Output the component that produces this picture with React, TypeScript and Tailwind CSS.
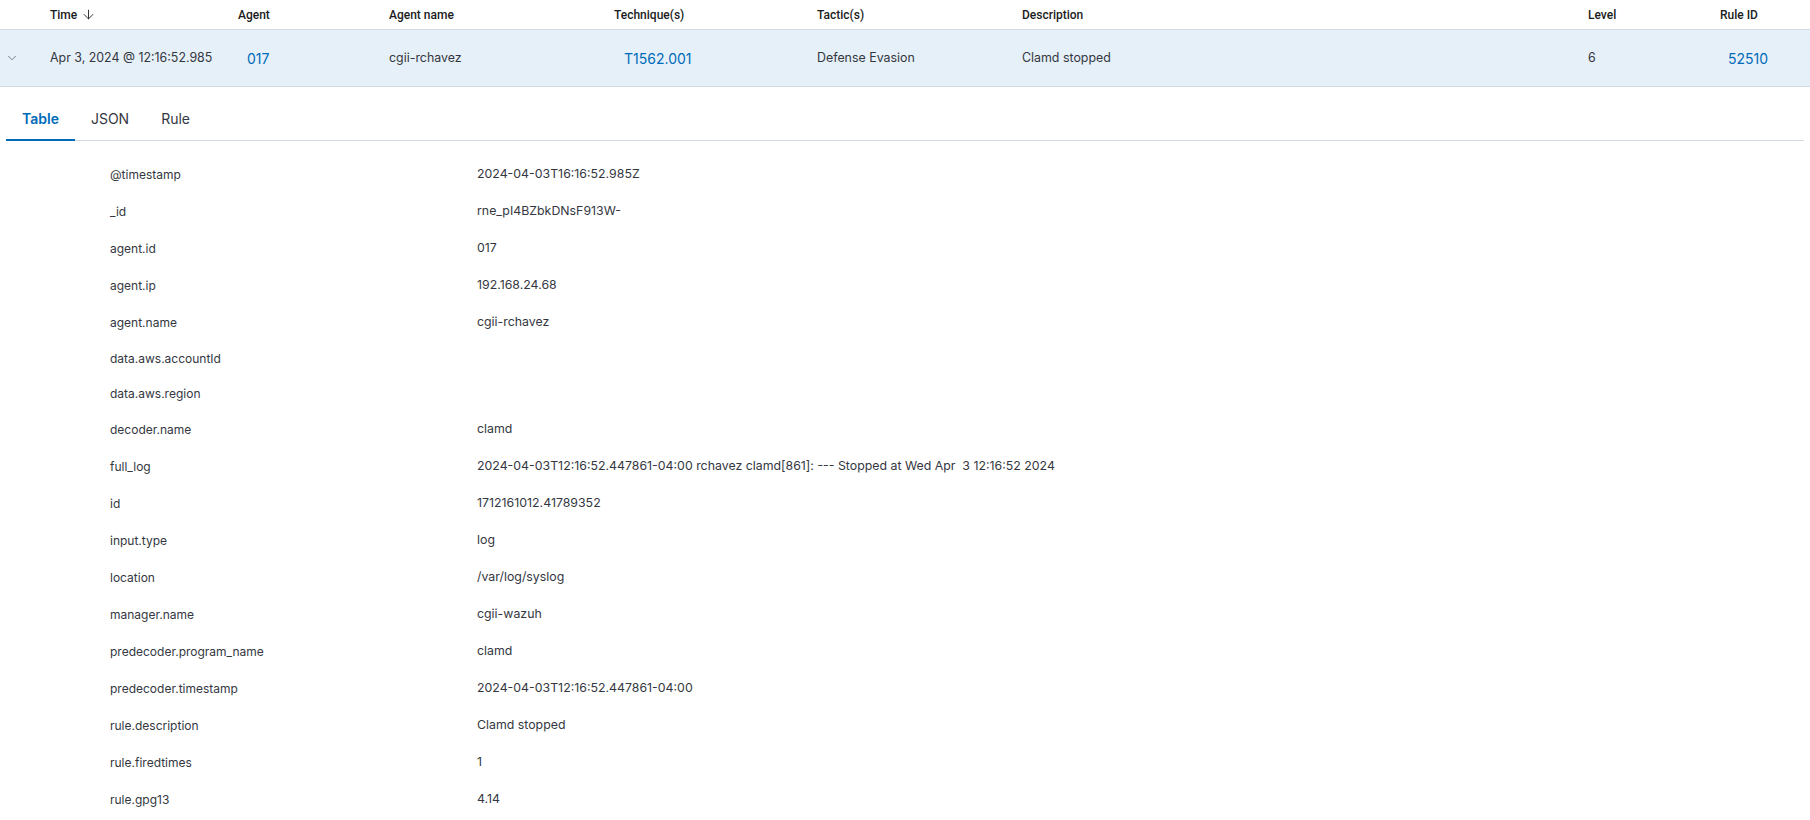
import { ArrowDown, ChevronDown } from 'lucide-react';

const fields: [string, string][] = [
  ['@timestamp', '2024-04-03T16:16:52.985Z'],
  ['_id', 'rne_pI4BZbkDNsF913W-'],
  ['agent.id', '017'],
  ['agent.ip', '192.168.24.68'],
  ['agent.name', 'cgii-rchavez'],
  ['data.aws.accountId', ''],
  ['data.aws.region', ''],
  ['decoder.name', 'clamd'],
  ['full_log', '2024-04-03T12:16:52.447861-04:00 rchavez clamd[861]: --- Stopped at Wed Apr  3 12:16:52 2024'],
  ['id', '1712161012.41789352'],
  ['input.type', 'log'],
  ['location', '/var/log/syslog'],
  ['manager.name', 'cgii-wazuh'],
  ['predecoder.program_name', 'clamd'],
  ['predecoder.timestamp', '2024-04-03T12:16:52.447861-04:00'],
  ['rule.description', 'Clamd stopped'],
  ['rule.firedtimes', '1'],
  ['rule.gpg13', '4.14'],
];

const App = () => {
  return (
    <div className="h-[820px] w-full overflow-hidden bg-white text-[#343741]" style={{ fontFamily: 'Inter, "Noto Sans", sans-serif' }}>
      {/* Column headers */}
      <div
        className="flex h-[30px] items-center border-b border-[#d3dae6] text-[12px] font-medium text-[#1a1c21]"
        style={{ fontFamily: 'Roboto, Inter, sans-serif' }}
      >
        <div className="w-[50px]" />
        <div className="flex w-[188px] items-center gap-[4px]">
          Time
          <ArrowDown className="h-[15px] w-[15px]" strokeWidth={1.4} />
        </div>
        <div className="w-[151px]">Agent</div>
        <div className="w-[225px]">Agent name</div>
        <div className="w-[203px]">Technique(s)</div>
        <div className="w-[205px]">Tactic(s)</div>
        <div className="w-[566px]">Description</div>
        <div className="w-[132px]">Level</div>
        <div className="flex-1">Rule ID</div>
      </div>

      {/* Expanded row */}
      <div className="flex h-[57px] items-center border-b border-[#d3dae6] bg-[#e6f0f8] text-[12.4px]">
        <div className="flex w-[50px] pl-[5px]">
          <ChevronDown className="h-[14px] w-[14px] text-[#535966]" strokeWidth={1.3} />
        </div>
        <div className="w-[188px]">Apr 3, 2024 @ 12:16:52.985</div>
        <div className="w-[151px] pl-[9px] text-[14px] text-[#006bb8]">017</div>
        <div className="w-[225px]">cgii-rchavez</div>
        <div className="w-[203px] pl-[10px] text-[14px] text-[#006bb8]">T1562.001</div>
        <div className="w-[205px]">Defense Evasion</div>
        <div className="w-[566px]">Clamd stopped</div>
        <div className="w-[132px]">6</div>
        <div className="flex-1 pl-[8px] text-[14px] text-[#006bb8]">52510</div>
      </div>

      {/* Tabs */}
      <div className="mx-[6px] mt-[13px] flex h-[41px] border-b border-[#d3dae6] text-[14px]">
        <div className="-mb-px flex items-center border-b-2 border-[#006bb8] px-4 pb-[3px] font-semibold text-[#006bb8]">Table</div>
        <div className="flex items-center px-4 pb-[4px] text-[#343741]">JSON</div>
        <div className="flex items-center px-4 pb-[4px] text-[#343741]">Rule</div>
      </div>

      {/* Document fields */}
      <div className="mt-[15px] flex flex-col text-[12px]">
        {fields.map(([key, value]) => (
          <div key={key} className={`flex items-center pl-[110px] ${value ? 'h-[37px]' : 'h-[35px]'}`}>
            <div className="w-[367px]">{key}</div>
            <div className="flex-1 whitespace-pre text-[12.35px]">{value}</div>
          </div>
        ))}
      </div>
    </div>
  );
};

export default App;
